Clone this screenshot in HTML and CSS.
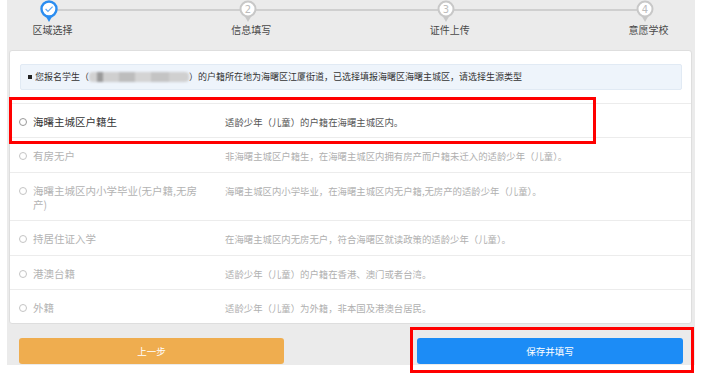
FILE: index.html
```html
<!DOCTYPE html>
<html lang="zh">
<head>
<meta charset="utf-8">
<title>区域选择</title>
<link rel="stylesheet" href="styles.css">
</head>
<body>
<div class="page">
  <div class="steps">
    <div class="step">
      <svg class="pin" width="18" height="23" viewBox="0 0 18 23"><path d="M5 15 L9 22 L13 15Z" fill="#2b8df0"/><circle cx="9" cy="9" r="7.5" fill="#fff" stroke="#2b8df0" stroke-width="2.4"/><path d="M5.6 9 L8 11.4 L12.6 6.6" fill="none" stroke="#5fa7f2" stroke-width="1.2"/></svg>
      <span class="step-label">区域选择</span>
    </div>
    <div class="step">
      <svg class="pin" width="18" height="23" viewBox="0 0 18 23"><path d="M5 15 L9 22 L13 15Z" fill="#c8c8c8"/><circle cx="9" cy="9" r="7.5" fill="#fff" stroke="#c8c8c8" stroke-width="2"/><text x="9" y="12.6" text-anchor="middle" class="num">2</text></svg>
      <span class="step-label">信息填写</span>
    </div>
    <div class="step">
      <svg class="pin" width="18" height="23" viewBox="0 0 18 23"><path d="M5 15 L9 22 L13 15Z" fill="#c8c8c8"/><circle cx="9" cy="9" r="7.5" fill="#fff" stroke="#c8c8c8" stroke-width="2"/><text x="9" y="12.6" text-anchor="middle" class="num">3</text></svg>
      <span class="step-label">证件上传</span>
    </div>
    <div class="step">
      <svg class="pin" width="18" height="23" viewBox="0 0 18 23"><path d="M5 15 L9 22 L13 15Z" fill="#c8c8c8"/><circle cx="9" cy="9" r="7.5" fill="#fff" stroke="#c8c8c8" stroke-width="2"/><text x="9" y="12.6" text-anchor="middle" class="num">4</text></svg>
      <span class="step-label">意愿学校</span>
    </div>
  </div>

  <div class="card">
    <div class="notice"><span class="bullet"></span>您报名学生（<span class="blur"></span>）的户籍所在地为海曙区江厦街道，已选择填报海曙区海曙主城区，请选择生源类型</div>

    <div class="row active">
      <span class="radio"></span>
      <span class="label">海曙主城区户籍生</span>
      <span class="desc">适龄少年（儿童）的户籍在海曙主城区内。</span>
    </div>
    <div class="row">
      <span class="radio"></span>
      <span class="label">有房无户</span>
      <span class="desc">非海曙主城区户籍生，在海曙主城区内拥有房产而户籍未迁入的适龄少年（儿童）。</span>
    </div>
    <div class="row">
      <span class="radio"></span>
      <span class="label">海曙主城区内小学毕业(无户籍,无房产)</span>
      <span class="desc">海曙主城区内小学毕业，在海曙主城区内无户籍,无房产的适龄少年（儿童）。</span>
    </div>
    <div class="row">
      <span class="radio"></span>
      <span class="label">持居住证入学</span>
      <span class="desc">在海曙主城区内无房无户，符合海曙区就读政策的适龄少年（儿童）。</span>
    </div>
    <div class="row">
      <span class="radio"></span>
      <span class="label">港澳台籍</span>
      <span class="desc">适龄少年（儿童）的户籍在香港、澳门或者台湾。</span>
    </div>
    <div class="row">
      <span class="radio"></span>
      <span class="label">外籍</span>
      <span class="desc">适龄少年（儿童）为外籍，非本国及港澳台居民。</span>
    </div>
  </div>

  <div class="actions">
    <button class="btn btn-prev">上一步</button>
    <button class="btn btn-save">保存并填写</button>
  </div>
</div>
<div class="mark mark-row"></div>
<div class="mark mark-btn"></div>
</body>
</html>
```

FILE: styles.css
```css
html, body {
  margin: 0;
  padding: 0;
  background: #fff;
  font-family: "Noto Sans CJK SC", "Microsoft YaHei", sans-serif;
}

.page {
  margin-left: 7px;
  width: 688px;
  background: #ebebeb;
  padding-bottom: 1px;
}

.steps {
  position: relative;
  height: 50px;
  display: flex;
  justify-content: space-between;
  padding: 0 25px 0 17px;
  box-sizing: border-box;
}

.steps::before {
  content: "";
  position: absolute;
  top: 9px;
  left: 42px;
  right: 50px;
  height: 2px;
  background: #cfcfcf;
}

.step {
  position: relative;
  width: 50px;
  display: flex;
  flex-direction: column;
  align-items: center;
}

.pin {
  display: block;
}

.num {
  font-size: 10px;
  fill: #bdbdbd;
  font-family: "DejaVu Sans", sans-serif;
}

.step-label {
  margin-top: 1px;
  font-size: 10px;
  line-height: 12px;
  color: #484848;
  white-space: nowrap;
  padding-left: 7px;
}

.card {
  margin-left: 2px;
  width: 683px;
  box-sizing: border-box;
  background: #fff;
  border: 1px solid #dedede;
  border-radius: 3px;
  padding-top: 13px;
}

.notice {
  margin: 0 9px 13px 10px;
  height: 26px;
  box-sizing: border-box;
  background: #eef4fb;
  border: 1px solid #e1eaf4;
  border-radius: 2px;
  padding-left: 7px;
  font-size: 9px;
  line-height: 24px;
  color: #333;
  white-space: nowrap;
}

.bullet {
  display: inline-block;
  width: 4px;
  height: 4px;
  background: #222;
  margin: 0 3px 1px 0;
  vertical-align: middle;
}

.blur {
  display: inline-block;
  vertical-align: middle;
  width: 100px;
  height: 10px;
  margin-top: -2px;
  background: linear-gradient(90deg, #d2d2d2 0 8px, #9a9a9a 8px 14px, #cfcfcf 14px 30px, #bdbdbd 30px 46px, #d4d4d4 46px 62px, #c4c4c4 62px 80px, #d0d0d0 80px 100px);
  filter: blur(1.2px);
  border-radius: 4px;
}

.row {
  display: flex;
  align-items: flex-start;
  border-top: 1px solid #ececec;
  padding: 11px 0 8.4px 9px;
  font-size: 10.5px;
  line-height: 14px;
  color: #b3b3b3;
}

.radio {
  flex: 0 0 auto;
  width: 8px;
  height: 8px;
  box-sizing: border-box;
  border: 1px solid #c4c4c4;
  border-radius: 50%;
  margin: 3px 6px 0 0;
  background: #fff;
}

.label {
  flex: 0 0 172px;
  margin-right: 20px;
}

.desc {
  font-size: 9.4px;
  color: #b0b0b0;
}

.row.active .label {
  color: #333;
}

.row.active .desc {
  color: #555;
}

.row.active .radio {
  border-color: #999;
}

.actions {
  display: flex;
  justify-content: space-between;
  padding: 14px 12px 0 12px;
}

.btn {
  width: 266px;
  height: 26px;
  border: none;
  border-radius: 3px;
  color: #fff;
  font-family: inherit;
  font-size: 9.5px;
  padding: 0;
  cursor: pointer;
}

.btn-prev {
  width: 265px;
  background: #efad4f;
}

.btn-save {
  background: #1c8cf6;
}

.mark {
  position: absolute;
  border: 3px solid #ff0000;
  box-sizing: border-box;
}

.mark-row {
  left: 9px;
  top: 97px;
  width: 587px;
  height: 47px;
}

.mark-btn {
  left: 410px;
  top: 327px;
  width: 284px;
  height: 46px;
}
```
